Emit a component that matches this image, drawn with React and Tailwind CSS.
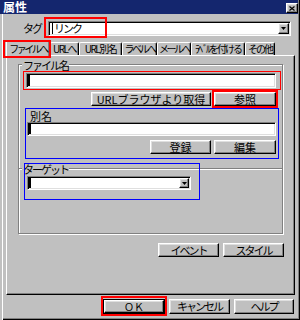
import React from 'react'

const raised =
  'flex items-center justify-center bg-[#c0c0c0] border border-t-white border-l-white border-r-black border-b-black shadow-[inset_-1px_-1px_0_#808080,inset_1px_1px_0_#dfdfdf]'
const sunken =
  'relative flex items-center bg-white border border-t-[#808080] border-l-[#808080] border-r-white border-b-white shadow-[inset_1px_1px_0_#000,inset_-1px_-1px_0_#dfdfdf]'
const etched = 'border border-[#808080] shadow-[1px_1px_0_#fff,inset_1px_1px_0_#fff]'

function Btn({ className = '', children }) {
  return <div className={`${raised} ${className}`}>{children}</div>
}

function DropBtn({ className = '' }) {
  return (
    <div className={`${raised} ${className}`}>
      <svg width="5" height="3" viewBox="0 0 5 3">
        <polygon points="0,0 5,0 2.5,3" fill="#000" />
      </svg>
    </div>
  )
}

const tabs = [
  { label: 'URLへ', w: 'w-[29px]', tr: 'tracking-[-1.5px]' },
  { label: 'URL別名', w: 'w-[43px]', tr: 'tracking-[-1.5px]' },
  { label: 'ラベルへ', w: 'w-[35px]', tr: 'tracking-[-2.5px]' },
  { label: 'メールへ', w: 'w-[34px]', tr: 'tracking-[-2.5px]' },
  { label: 'ﾗﾍﾞﾙを付ける', w: 'w-[54px]', tr: 'tracking-[-2px]' },
  { label: 'その他', w: 'w-[30px]', tr: 'tracking-[-2px]' },
]

export default function App() {
  return (
    <div className="relative h-[320px] w-[300px] overflow-hidden bg-[#c0c0c0] font-['Noto_Sans_CJK_JP',sans-serif] text-[11px] leading-none text-black shadow-[inset_2px_0_0_#c0c0c0,inset_3px_0_0_#fff,inset_-1px_-1px_0_#000,inset_-2px_-2px_0_#808080]">
      {/* title bar */}
      <div className="mr-[2px] flex h-[14px] items-center justify-between bg-[#14266e] pl-[3px]">
        <span className="text-[12px] font-bold leading-[14px] text-white">属性</span>
        <div className={`${raised} mt-[2px] h-[10px] w-[12px]`}>
          <svg width="6" height="5" viewBox="0 0 6 5">
            <path d="M0.5 0.5L5.5 4.5M5.5 0.5L0.5 4.5" stroke="#000" strokeWidth="1.2" />
          </svg>
        </div>
      </div>

      {/* tag row */}
      <div className="mt-[7px] flex h-[15px] items-center">
        <span className="ml-[23px] w-[25px] tracking-[-2px]">タグ</span>
        <div className={`${sunken} h-[15px] w-[243px]`}>
          <span className="ml-[3px] h-[11px] w-px bg-black" />
          <span className="ml-[1px] tracking-[-2px]">リンク</span>
          <DropBtn className="ml-auto mr-[1px] h-[11px] w-[11px]" />
        </div>
      </div>

      {/* tabs */}
      <div className="mt-[4px] flex h-[15px] items-end pl-[6px] text-[10px]">
        <div className="relative z-10 -mb-px flex h-[16px] w-[44px] items-center justify-center whitespace-nowrap rounded-t-[2px] border border-b-0 border-t-white border-l-white border-r-black bg-[#c0c0c0] tracking-[-2.5px] shadow-[inset_-1px_0_0_#808080]">
          ファイルへ
        </div>
        {tabs.map((t) => (
          <div
            key={t.label}
            className={`flex h-[13px] items-center justify-center whitespace-nowrap rounded-t-[2px] border border-b-0 border-t-white border-l-white border-r-black shadow-[inset_-1px_0_0_#808080] ${t.w} ${t.tr}`}
          >
            {t.label}
          </div>
        ))}
      </div>

      {/* tab panel */}
      <div className="ml-[6px] h-[240px] w-[289px] border border-t-white border-l-white border-r-black border-b-black pl-[11px] shadow-[inset_-1px_-1px_0_#808080]">
        <div className={`relative mt-[8px] h-[170px] w-[265px] ${etched}`}>
          <span className="absolute -top-[6px] left-[3px] bg-[#c0c0c0] px-px leading-[12px] tracking-[-2px]">
            ファイル名
          </span>

          <div className={`${sunken} ml-[7px] mt-[8px] h-[15px] w-[250px]`}>
            <span className="ml-[1px] h-[11px] w-[2px] bg-black" />
          </div>

          <div className="ml-[72px] mt-[4px] flex h-[14px] gap-[3px]">
            <Btn className="w-[120px]">URLブラウザより取得</Btn>
            <Btn className="w-[62px]">参照</Btn>
          </div>

          <div className="ml-[11px] mt-[5px] h-[11px] leading-[11px]">別名</div>
          <div className={`${sunken} ml-[8px] h-[14px] w-[249px]`}>
            <span className="ml-[1px] h-[10px] w-[2px] bg-black" />
          </div>
          <div className="ml-[131px] mt-[4px] flex h-[14px] gap-[3px]">
            <Btn className="w-[61px]">登録</Btn>
            <Btn className="w-[62px]">編集</Btn>
          </div>

          <div className="relative mt-[14px] border-t border-[#808080] shadow-[inset_0_1px_0_#fff]">
            <span className="absolute -top-[6px] left-[3px] bg-[#c0c0c0] px-px leading-[12px] tracking-[-2px]">
              ターゲット
            </span>
            <div className={`${sunken} ml-[8px] mt-[7px] h-[14px] w-[164px]`}>
              <span className="ml-[1px] h-[10px] w-[2px] bg-black" />
              <DropBtn className="ml-auto mr-[1px] h-[10px] w-[10px]" />
            </div>
          </div>
        </div>

        <div className="mt-[9px] flex h-[14px] justify-end gap-[4px] pr-[10px] tracking-[-2px]">
          <Btn className="w-[61px]">イベント</Btn>
          <Btn className="w-[61px]">スタイル</Btn>
        </div>
      </div>

      {/* dialog buttons */}
      <div className="mt-[4px] flex h-[15px] justify-end gap-[4px] pr-[6px]">
        <div className="flex w-[62px] border border-black">
          <Btn className="flex-1 text-[10px]">ＯＫ</Btn>
        </div>
        <Btn className="w-[61px] tracking-[-2px]">キャンセル</Btn>
        <Btn className="w-[60px] tracking-[-2px]">ヘルプ</Btn>
      </div>

      {/* annotation boxes */}
      <div className="pointer-events-none absolute left-[44px] top-[17px] z-20 h-[21px] w-[63px] border-2 border-[#ff0000]" />
      <div className="pointer-events-none absolute left-[3px] top-[40px] z-20 h-[18px] w-[48px] border-2 border-[#ff0000]" />
      <div className="pointer-events-none absolute left-[23px] top-[71px] z-20 h-[19px] w-[258px] border border-[#ff0000]" />
      <div className="pointer-events-none absolute left-[212px] top-[90px] z-20 h-[18px] w-[66px] border-2 border-[#ff0000]" />
      <div className="pointer-events-none absolute left-[25px] top-[108px] z-20 h-[51px] w-[254px] border border-[#0000ff]" />
      <div className="pointer-events-none absolute left-[24px] top-[163px] z-20 h-[37px] w-[176px] border border-[#0000ff]" />
      <div className="pointer-events-none absolute left-[101px] top-[296px] z-20 h-[20px] w-[66px] border-2 border-[#ff0000]" />
    </div>
  )
}
